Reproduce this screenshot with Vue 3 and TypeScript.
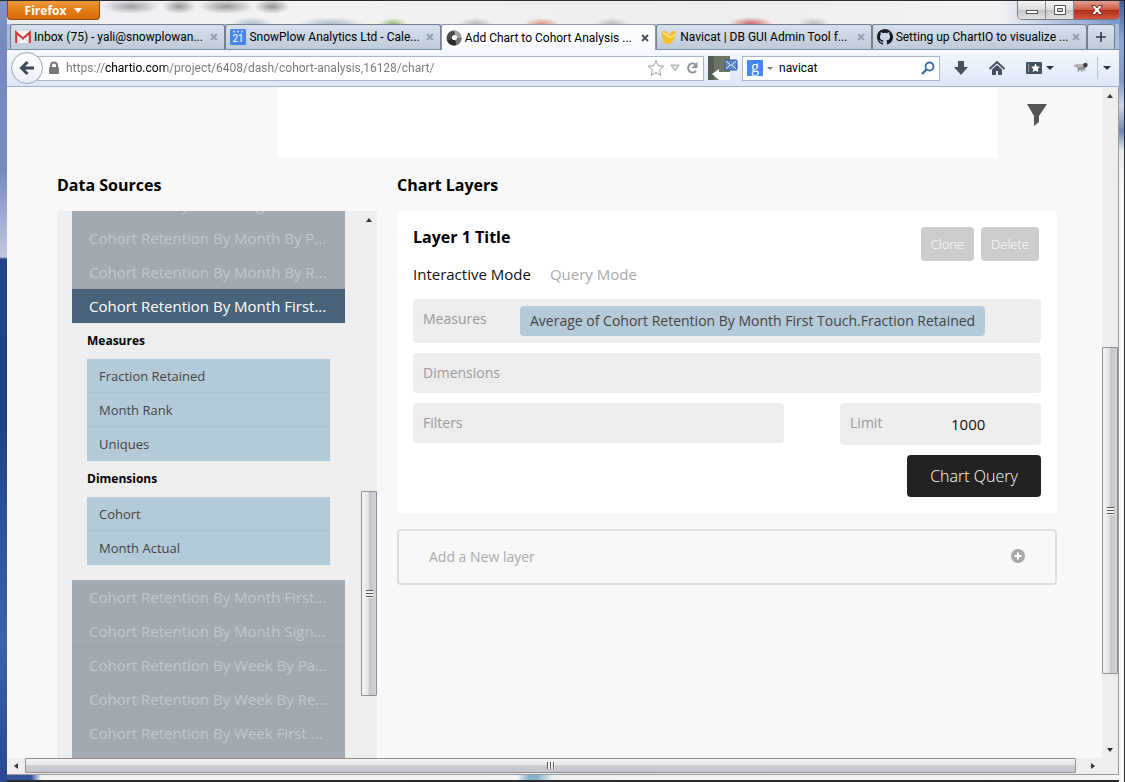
<script setup lang="ts">
import { ref } from 'vue'

interface Tab { id: string; title: string }

const tabs: Tab[] = [
  { id: 'gmail', title: 'Inbox (75) - yali@snowplowan...' },
  { id: 'calendar', title: 'SnowPlow Analytics Ltd - Cale...' },
  { id: 'chartio', title: 'Add Chart to Cohort Analysis ...' },
  { id: 'navicat', title: 'Navicat | DB GUI Admin Tool f...' },
  { id: 'github', title: 'Setting up ChartIO to visualize ...' },
]
const activeTab = ref('chartio')
const url = ref('https://chartio.com/project/6408/dash/cohort-analysis,16128/chart/')
const search = ref('navicat')
const limit = ref('1000')
const mode = ref('Interactive Mode')
const modes = ['Interactive Mode', 'Query Mode']

const tablesAbove = [
  'Cohort Size By Marketing, P...',
  'Cohort Retention By Month By P...',
  'Cohort Retention By Month By R...',
]
const selectedTable = 'Cohort Retention By Month First...'
const fieldGroups = [
  { name: 'Measures', fields: ['Fraction Retained', 'Month Rank', 'Uniques'] },
  { name: 'Dimensions', fields: ['Cohort', 'Month Actual'] },
]
const tablesBelow = [
  'Cohort Retention By Month First...',
  'Cohort Retention By Month Sign...',
  'Cohort Retention By Week By Pa...',
  'Cohort Retention By Week By Re...',
  'Cohort Retention By Week First ...',
]
</script>

<template>
  <div class="window">
    <header class="titlebar">
      <button class="firefox" type="button">Firefox <span class="caret light"></span></button>
      <div class="backdrop" aria-hidden="true"></div>
      <div class="controls">
        <button type="button" aria-label="Minimize">
          <svg width="14" height="12" viewBox="0 0 14 12"><rect x="1.5" y="6.5" width="11" height="3" fill="#fff" stroke="#555" /></svg>
        </button>
        <button type="button" aria-label="Maximize">
          <svg width="14" height="12" viewBox="0 0 14 12"><path d="M1.5 1.5h11v9h-11zM4.500 4.500h5v3h-5z" fill="#fff" fill-rule="evenodd" stroke="#555" /></svg>
        </button>
        <button type="button" class="close" aria-label="Close">
          <svg width="14" height="12" viewBox="0 0 14 12"><path d="M1.500 1.500h3.500l2 2.500 2-2.500h3.500L9 6l3.500 4.500H9L7 8l-2 2.500H1.500L5 6z" fill="#fff" stroke="#6b3a38" /></svg>
        </button>
      </div>
    </header>

    <nav class="tabs" aria-label="Browser tabs">
      <div v-for="tab in tabs" :key="tab.id" class="tab" :class="{ active: tab.id === activeTab }">
        <button class="tab-main" type="button" @click="activeTab = tab.id">
          <svg v-if="tab.id === 'gmail'" width="16" height="16" viewBox="0 0 16 16"><rect y="2" width="16" height="12" rx="1" fill="#f4f4f4" /><path d="M1.200 14V3.500L8 9.500l6.800-6V14" fill="none" stroke="#d5393b" stroke-width="2.200" /><path d="M3 13l4-4M13 13L9 9" stroke="#ccc" /></svg>
          <svg v-else-if="tab.id === 'calendar'" width="16" height="16" viewBox="0 0 16 16"><rect width="16" height="16" rx="1" fill="#4787ed" /><path d="M4 1.500v2M8 1.500v2M12 1.500v2" stroke="#cfe0ff" stroke-width="1.500" /><text x="8" y="13" text-anchor="middle" font-size="10" fill="#fff">21</text></svg>
          <svg v-else-if="tab.id === 'chartio'" width="16" height="16" viewBox="0 0 16 16"><circle cx="8" cy="8" r="7.500" fill="#4c4c4c" /><path d="M8 .5A7.500 7.500 0 0 1 15.500 8H10z" fill="#a4a4a4" /><path d="M15.500 8a7.500 7.500 0 0 1-5 7L9 9z" fill="#777" /><path d="M1 10a7.500 7.500 0 0 0 9.500 5L8 9z" fill="#292929" /><circle cx="8.500" cy="7.500" r="2.600" fill="#fff" /></svg>
          <svg v-else-if="tab.id === 'navicat'" width="16" height="16" viewBox="0 0 16 16"><path d="M1 3c2-2 5-1 6 2 2 1 3 0 3-2 3-2 5-1 5 2 0 2-1 3-2 5s-2 5-6 5c-3 0-6-2-5-6C1 8 0 5 1 3z" fill="#f5c02c" /><path d="M2 4c2 0 3 1 5 3s5 1 7-2" fill="none" stroke="#ffe58a" stroke-width="1.500" /></svg>
          <svg v-else width="16" height="16" viewBox="0 0 16 16"><path fill="#161b22" d="M8 0C3.580 0 0 3.580 0 8c0 3.540 2.290 6.530 5.470 7.590.4.070.55-.17.55-.38v-1.490c-2.230.49-2.700-.94-2.700-.94-.36-.93-.89-1.170-.89-1.170-.73-.5.050-.49.050-.49.800.060 1.230.83 1.230.83.710 1.220 1.870.87 2.330.66.070-.52.280-.87.500-1.070-1.780-.2-3.640-.89-3.640-3.950 0-.87.310-1.590.82-2.150-.08-.2-.36-1.020.08-2.120 0 0 .67-.21 2.200.82a7.600 7.600 0 0 1 4 0c1.530-1.040 2.200-.82 2.200-.82.440 1.100.160 1.920.080 2.120.510.560.820 1.270.820 2.150 0 3.070-1.870 3.750-3.650 3.950.290.250.540.730.540 1.480v2.190c0 .21.150.46.550.38A8 8 0 0 0 8 0z" /></svg>
          <span>{{ tab.title }}</span>
        </button>
        <button class="tab-close" type="button" :aria-label="'Close ' + tab.title">
          <svg width="8" height="8" viewBox="0 0 8 8"><path d="M1 1l6 6M7 1L1 7" stroke="currentColor" stroke-width="1.800" /></svg>
        </button>
      </div>
      <button class="new-tab" type="button" aria-label="New tab">
        <svg width="12" height="12" viewBox="0 0 12 12"><path d="M6 1v10M1 6h10" stroke="#333d48" stroke-width="1.600" /></svg>
      </button>
    </nav>

    <div class="toolbar">
      <button class="back" type="button" aria-label="Back">
        <svg width="18" height="18" viewBox="0 0 18 18"><path d="M16 9H4M9.500 3L3.500 9l6 6" fill="none" stroke="#3f4b59" stroke-width="3" /></svg>
      </button>
      <div class="address">
        <svg width="12" height="14" viewBox="0 0 12 14"><path d="M3 7V4.500a3 3 0 0 1 6 0V7" fill="none" stroke="#777" stroke-width="2" /><rect x="1" y="6" width="10" height="7" rx="1" fill="#777" /></svg>
        <input v-model="url" type="text" aria-label="Address" spellcheck="false" />
        <button type="button" aria-label="Bookmark">
          <svg width="18" height="18" viewBox="0 0 18 18"><path d="M9 1.500l2.200 5.200 5.600.5-4.200 3.700 1.200 5.500L9 13.500l-4.800 2.900 1.200-5.500L1.200 7.200l5.600-.5z" fill="#fff" stroke="#9a9fa6" /></svg>
        </button>
        <button type="button" aria-label="History">
          <svg width="10" height="8" viewBox="0 0 10 8"><path d="M.8 1h8.400L5 7z" fill="#dcdfe4" stroke="#a3a8b0" /></svg>
        </button>
        <button type="button" aria-label="Reload">
          <svg width="14" height="14" viewBox="0 0 14 14"><path d="M10.500 3.500A4.500 4.500 0 1 0 11 10" fill="none" stroke="#8c939d" stroke-width="2" /><path d="M12.500 1v6h-6z" fill="#8c939d" /></svg>
        </button>
      </div>
      <button class="mail" type="button" aria-label="Mail preview">
        <svg width="30" height="24" viewBox="0 0 30 24"><path d="M0 0h22v24H0z" fill="#6d7463" /><path d="M0 0h6v24H0z" fill="#535d55" /><path d="M11 13v3h11v8H11v0L4 18z" fill="#fff" /><rect x="17" y="4" width="12" height="10" rx="1" fill="#5c88c6" stroke="#345b96" /><path d="M18 5l5 4.500L28 5M18 13l4-4M28 13l-4-4" fill="none" stroke="#dce9fa" /></svg>
      </button>
      <div class="search">
        <svg width="16" height="16" viewBox="0 0 16 16"><rect width="16" height="16" rx="1" fill="#4486f4" /><text x="8" y="12" text-anchor="middle" font-size="16" fill="#fff">g</text></svg>
        <span class="caret small"></span>
        <input v-model="search" type="text" aria-label="Search" spellcheck="false" />
        <button type="button" aria-label="Go">
          <svg width="14" height="14" viewBox="0 0 14 14"><circle cx="8.500" cy="5.500" r="4" fill="none" stroke="#3c6ca3" stroke-width="1.800" /><path d="M5.500 8.500L1 13" stroke="#3c6ca3" stroke-width="2.400" /></svg>
        </button>
      </div>
      <div class="tools">
        <button type="button" aria-label="Downloads">
          <svg width="16" height="16" viewBox="0 0 16 16"><path d="M5 1h6v6h4l-7 8-7-8h4z" fill="#47525f" /></svg>
        </button>
        <button type="button" aria-label="Home">
          <svg width="18" height="16" viewBox="0 0 18 16"><path d="M1.500 9L9 2l7.500 7" fill="none" stroke="#47525f" stroke-width="2" /><path d="M4 9.500l5-4.500 5 4.500V15h-4v-4H8v4H4z" fill="#47525f" /></svg>
        </button>
        <button type="button" aria-label="Bookmarks">
          <svg width="18" height="16" viewBox="0 0 18 16"><rect x="1" y="2" width="16" height="12" rx="1" fill="#47525f" /><path d="M3.500 4v8" stroke="#8d96a1" /><path d="M10.500 3.500l1.400 2.900 3.100.4-2.300 2.200.6 3.100-2.800-1.500-2.800 1.500.6-3.100L6 6.800l3.100-.4z" fill="#fff" /></svg>
          <span class="caret"></span>
        </button>
        <div class="tail">
          <button type="button" aria-label="Firebug">
            <svg width="16" height="14" viewBox="0 0 16 14"><ellipse cx="9" cy="6" rx="5" ry="3" fill="#8f8f8c" transform="rotate(-20 9 6)" /><ellipse cx="6" cy="4.500" rx="4" ry="1.800" fill="#bbb" /><circle cx="12.500" cy="4" r="2.200" fill="#44413d" /><path d="M6 8l-1 3M9 9v2M11 8l1 2M1 5h4" stroke="#888" /></svg>
          </button>
          <button class="more" type="button" aria-label="More tools"><span class="caret"></span></button>
        </div>
      </div>
    </div>

    <div class="viewport">
      <main class="page">
        <section class="preview">
          <div class="chart-area"></div>
          <button type="button" aria-label="Filter">
            <svg width="20" height="23" viewBox="0 0 20 23"><path d="M0 0h20l-8 12v6l-5 4V12z" fill="#555" /></svg>
          </button>
        </section>

        <div class="columns">
          <section class="sources">
            <h2>Data Sources</h2>
            <div class="source-panel">
              <div class="source-list">
                <button v-for="t in tablesAbove" :key="t" class="source" type="button">{{ t }}</button>
                <button class="source selected" type="button">{{ selectedTable }}</button>
                <div class="fields">
                  <template v-for="group in fieldGroups" :key="group.name">
                    <h3>{{ group.name }}</h3>
                    <ul>
                      <li v-for="f in group.fields" :key="f">{{ f }}</li>
                    </ul>
                  </template>
                </div>
                <button v-for="t in tablesBelow" :key="t" class="source" type="button">{{ t }}</button>
                <div class="source"></div>
              </div>
              <div class="scroll vertical inner" aria-hidden="true">
                <span class="arrow"><i class="up"></i></span>
                <span class="before"></span>
                <span class="thumb"><i class="grip"></i></span>
                <span class="after"></span>
              </div>
            </div>
          </section>

          <section class="layers">
            <h2>Chart Layers</h2>
            <form class="card" @submit.prevent>
              <div class="card-head">
                <h3>Layer 1 Title</h3>
                <button type="button">Clone</button>
                <button type="button">Delete</button>
              </div>
              <div class="modes">
                <button v-for="m in modes" :key="m" type="button" :class="{ on: m === mode }" @click="mode = m">{{ m }}</button>
              </div>
              <div class="slot measures">
                <span class="slot-name">Measures</span>
                <span class="pill">Average of Cohort Retention By Month First Touch.Fraction Retained</span>
              </div>
              <div class="slot"><span class="slot-name">Dimensions</span></div>
              <div class="slot-row">
                <div class="slot filters"><span class="slot-name">Filters</span></div>
                <div class="slot limit">
                  <label class="slot-name" for="limit">Limit</label>
                  <input id="limit" v-model="limit" type="text" />
                </div>
              </div>
              <button class="submit" type="submit">Chart Query</button>
            </form>
            <button class="add" type="button">
              Add a New layer
              <svg width="14" height="14" viewBox="0 0 14 14"><circle cx="7" cy="7" r="7" fill="#aaa" /><path d="M7 3.500v7M3.500 7h7" stroke="#fff" stroke-width="2" /></svg>
            </button>
          </section>
        </div>
      </main>
      <div class="scroll vertical outer" aria-hidden="true">
        <span class="arrow"><i class="up"></i></span>
        <span class="before"></span>
        <span class="thumb"><i class="grip"></i></span>
        <span class="after"></span>
        <span class="arrow"><i class="down"></i></span>
      </div>
      <div class="scroll horizontal" aria-hidden="true">
        <span class="arrow"><i class="left"></i></span>
        <span class="thumb"><i class="grip"></i></span>
        <span class="arrow end"><i class="right"></i></span>
      </div>
      <div class="corner"></div>
    </div>
    <footer class="frame-bottom"></footer>
  </div>
</template>

<style>
body { overflow: hidden; }
</style>

<style scoped>
* { box-sizing: border-box; }
button { padding: 0; border: 0; background: none; font: inherit; color: inherit; }
input { min-width: 0; padding: 0; border: 0; outline: 0; background: none; font: inherit; }
h2, h3, ul { margin: 0; padding: 0; list-style: none; }
svg { display: block; flex: none; }

.window {
  display: flex;
  flex-direction: column;
  height: 100vh;
  padding: 0 5px 0 7px;
  border-top: 1px solid #2c2a2d;
  border-right: 1px solid #29292c;
  font-family: "Open Sans", "Noto Sans", sans-serif;
  font-size: 12px;
  color: #000;
  background:
    linear-gradient(#8193c6 0, #7588be 50px, #7889c0 170px, #c4c9e3 256px, #234587 258px, #1f4184 420px, #3d62ad 640px, #28478f 100%) left / 7px 100% no-repeat,
    linear-gradient(#3f5fa3 0, #8fa6d8 40px, #8398c7 80px, #cdd6e8 105px, #7186b4 130px, #e8ebf1 150px, #fafafa 190px, #fafafa 100%) right / 5px 100% no-repeat,
    #e9eaec;
}
.titlebar { display: flex; flex: none; height: 23px; align-items: flex-start; }
.firefox {
  display: flex;
  align-items: center;
  justify-content: center;
  gap: 8px;
  width: 93px;
  height: 19px;
  border: 1px solid #8b4a17;
  border-top: 0;
  border-radius: 0 0 4px 4px;
  background: linear-gradient(#ee9a3c, #e27912 60%, #d96c0c);
  color: #fff;
  font-weight: 700;
}
.backdrop {
  flex: 1;
  height: 23px;
  margin-right: -103px;
  background:
    radial-gradient(ellipse at center, #a0a0a3, transparent 70%) 2px -2px / 58px 15px no-repeat,
    radial-gradient(ellipse at center, #98989b, transparent 70%) 62px -2px / 34px 15px no-repeat,
    radial-gradient(ellipse at center, #98989b, transparent 70%) 98px -2px / 56px 15px no-repeat,
    radial-gradient(ellipse at center, #949498, transparent 70%) 154px -2px / 36px 15px no-repeat,
    radial-gradient(ellipse at center, #a5b5c2, transparent 70%) 130px 16px / 44px 16px no-repeat,
    radial-gradient(ellipse at center, #a3b3c1, transparent 70%) 196px 16px / 70px 16px no-repeat,
    radial-gradient(ellipse at center, #94b578, transparent 70%) 278px 17px / 30px 12px no-repeat,
    radial-gradient(ellipse at center, #b8b8b8, transparent 70%) 358px 17px / 36px 12px no-repeat,
    radial-gradient(ellipse at center, #df907c, transparent 70%) 424px 17px / 36px 12px no-repeat,
    radial-gradient(ellipse at center, #bcbcbc, transparent 70%) 494px 17px / 36px 12px no-repeat,
    radial-gradient(ellipse at center, #cf6262, transparent 70%) 628px 16px / 46px 14px no-repeat,
    radial-gradient(ellipse at center, #bdbdbd, transparent 70%) 698px 16px / 32px 14px no-repeat,
    linear-gradient(90deg, #eef0f3 0, #f2f2f2 20%, #ededee 60%, #f3f3f3 88%, #7796cf 100%);
}
.controls {
  display: flex;
  z-index: 1;
  width: 103px;
  height: 19px;
  margin-right: -1px;
  border: 1px solid #77797f;
  border-top: 0;
  border-radius: 0 0 5px 5px;
  overflow: hidden;
}
.controls button {
  display: grid;
  place-items: center;
  width: 28px;
  border-right: 1px solid #888;
  background: linear-gradient(#f4f4f4, #dcdcdc 50%, #c3c4c6 50%, #e2e2e2);
}
.controls .close { flex: 1; border: 0; background: linear-gradient(#e0a294, #cf5742 48%, #b02b19 50%, #cf553e); }

.caret { width: 0; height: 0; border: 4px solid transparent; border-top-color: #2c3440; border-bottom-width: 0; }
.caret.light { border-top-color: #fff; border-top-width: 5px; }
.caret.small { border-width: 3px 3px 0; border-top-color: #777; }

.tabs, .toolbar { font-family: Roboto, "Open Sans", sans-serif; }
.tabs { display: flex; flex: none; height: 26px; padding: 0 4px 0 3px; background: linear-gradient(90deg, #a9b9da, #c2cedd 60%, #a9b9da); border-bottom: 1px solid #7d8ea4; }
.tab {
  display: flex;
  flex: 1 1 0;
  min-width: 0;
  align-items: center;
  padding-right: 3px;
  border: 1px solid #75808e;
  border-bottom: 0;
  border-radius: 3px 3px 0 0;
  background: linear-gradient(#d6e0ec, #bfcbd9);
}
.tab.active { margin-bottom: -1px; border-color: #8c98a8; background: linear-gradient(#fff, #f7fafe); }
.tab-main { display: flex; flex: 1; min-width: 0; align-items: center; gap: 3px; padding-left: 4px; text-align: left; }
.tab-main span { white-space: nowrap; }
.tab-close { display: grid; place-items: center; width: 14px; height: 20px; color: #94a0ad; }
.active .tab-close { color: #434d58; }
.new-tab { display: grid; place-items: center; width: 28px; border: 1px solid #75808e; border-bottom: 0; border-radius: 3px 3px 0 0; background: linear-gradient(#d6e0ec, #bfcbd9); }

.toolbar {
  display: flex;
  flex: none;
  align-items: center;
  height: 37px;
  padding-left: 4px;
  background: linear-gradient(#f5f9fe, #dce7f5);
  border-bottom: 1px solid #9db3d3;
}
.back { display: grid; place-items: center; flex: none; z-index: 1; width: 32px; height: 32px; border: 1px solid #9aa8b8; border-radius: 50%; background: linear-gradient(#fff, #e9eff7); }
.address { display: flex; flex: 1; align-items: center; height: 25px; margin-left: -6px; padding: 0 4px 0 10px; border: 1px solid #a9b6c6; background: #fff; }
.address input {
  flex: 1;
  margin-left: 6px;
  color: transparent;
  background: linear-gradient(90deg, #777 38px, #000 38px 101px, #777 101px) text;
}
.address button { margin-left: 5px; }
.mail { width: 30px; height: 24px; margin: 0 4px; }
.search { display: flex; align-items: center; width: 198px; height: 25px; padding: 0 4px; border: 1px solid #a9b6c6; background: #fff; }
.search svg text { font-family: "Liberation Serif", serif; }
.search .caret { margin: 0 6px 0 4px; }
.search input { flex: 1; }
.tools { display: flex; align-items: center; gap: 19px; width: 179px; padding-left: 13px; }
.tools button { display: flex; align-items: center; gap: 3px; }
.tail { display: flex; align-items: center; gap: 8px; }
.tools .more { height: 22px; padding-left: 5px; border-left: 1px solid #b9c4d2; }

.viewport { display: grid; flex: 1; min-height: 0; grid-template: minmax(0, 1fr) 17px / minmax(0, 1fr) 16px; border-right: 1px solid #999; background: #f8f8f8; }
.page { display: flex; flex-direction: column; min-height: 0; padding: 0 45px 0 50px; overflow: hidden; background: #f8f8f8; }
.preview { display: grid; flex: none; grid-template-columns: 22% 72% 6%; height: 71px; }
.chart-area { grid-column: 2; background: #fff; }
.preview button { justify-self: center; align-self: start; margin-top: 17px; margin-left: 20px; }
.columns { display: grid; flex: 1; min-height: 0; grid-template: minmax(0, 1fr) / 32fr 66fr; column-gap: 20px; }
h2 { flex: none; height: 53px; font-size: 16px; line-height: 54px; }
.sources { display: flex; flex-direction: column; min-height: 0; }
.source-panel { display: flex; flex: 1; min-height: 0; padding-left: 15px; overflow: hidden; background: #eee; }
.source-list { flex: 1; min-width: 0; margin-top: -24px; margin-right: 16px; }
.source {
  display: block;
  width: 100%;
  height: 34px;
  padding: 0 17px;
  border-bottom: 1px solid #9da5ac;
  background: #a2a9b0;
  color: #c3c6c9;
  font-size: 15px;
  text-align: left;
  white-space: nowrap;
}
.source.selected { border: 0; background: #48637a; color: #fff; }
.fields { padding: 0 15px 15px; }
.fields h3 { height: 36px; font-size: 12px; line-height: 36px; }
.fields li { height: 34px; padding-left: 12px; border-bottom: 1px solid #abc2d1; background: #b5cad8; color: #444; font-size: 13px; line-height: 34px; }
.fields li:last-child { border: 0; }

.layers { min-width: 0; }
.card { display: flex; flex-direction: column; padding: 16px; border-radius: 3px; background: #fff; }
.card-head { display: flex; height: 34px; padding-right: 2px; gap: 7px; }
.card-head h3 { flex: 1; font-size: 16px; line-height: 20px; }
.card-head button { padding: 0 10px; border-radius: 4px; background: #ccc; color: #fff; font-size: 13px; font-weight: 300; }
.modes { display: flex; gap: 19px; height: 38px; color: #aaa; font-size: 15px; align-items: flex-start; line-height: 26px; }
.modes .on { color: #111; }
.slot { display: flex; height: 40px; margin-bottom: 10px; padding: 0 10px; border-radius: 4px; background: #ededed; }
.slot-name { width: 97px; color: #999; font-size: 14px; line-height: 40px; }
.measures { height: 44px; align-items: flex-start; }
.pill { margin-top: 7px; padding: 0 10px; border-radius: 4px; background: #b5cad8; color: #444; font-size: 14px; line-height: 30px; white-space: nowrap; }
.slot-row { display: flex; justify-content: space-between; align-items: flex-start; }
.filters { width: 59%; }
.limit { width: 32%; height: 42px; }
.limit input { flex: 1; padding-left: 4px; font-size: 15px; color: #111; }
.submit { align-self: flex-end; width: 134px; height: 42px; border-radius: 4px; background: #222; color: #fff; font-size: 16px; font-weight: 300; }
.add {
  display: flex;
  align-items: center;
  justify-content: space-between;
  width: 100%;
  height: 56px;
  margin-top: 16px;
  padding: 0 30px 2px;
  border: 2px solid #ddd;
  border-radius: 4px;
  color: #aaa;
  font-size: 14px;
}

.scroll { display: flex; background: #eee; }
.vertical { flex: none; flex-direction: column; width: 16px; }
.horizontal { height: 17px; padding-bottom: 1px; border-bottom: 1px solid #999; }
.scroll span { flex: none; }
.arrow { display: grid; place-items: center; width: 16px; height: 17px; }
.horizontal .arrow { width: 18px; height: 15px; }
.horizontal .end { margin-left: 8px; }
.arrow i { border: 3px solid transparent; }
.arrow .up { border-bottom: 4px solid #333; border-top: 0; }
.arrow .down { border-top: 4px solid #333; border-bottom: 0; }
.arrow .left { border-right: 4px solid #333; border-left: 0; }
.arrow .right { border-left: 4px solid #333; border-right: 0; }
.scroll .thumb { display: grid; place-items: center; border: 1px solid #8f9094; border-radius: 1px; background: linear-gradient(90deg, #f5f5f6, #e3e3e6 45%, #c4c4cb 55%, #d3d3d9); }
.horizontal .thumb { flex: 1; background: linear-gradient(#f5f5f6, #e3e3e6 45%, #c9c9cf 55%, #c6c6cc); }
.grip { width: 7px; height: 8px; background: repeating-linear-gradient(#555 0 1px, #f4f4f4 1px 3px); }
.horizontal .grip { width: 8px; height: 7px; background: repeating-linear-gradient(90deg, #555 0 1px, #f4f4f4 1px 3px); }
.scroll.inner .before { flex: 264 0 0; }
.scroll.inner .thumb { flex: 204 0 0; }
.scroll.inner .after { flex: 62 0 0; }
.scroll.outer .before { flex: 244 0 0; }
.scroll.outer .thumb { flex: 326 0 0; }
.scroll.outer .after { flex: 67 0 0; }
.corner { background: #eee; border-bottom: 1px solid #999; }
.frame-bottom {
  flex: none;
  height: 7px;
  border-bottom: 2px solid #29292c;
  background: linear-gradient(90deg, #34539a 0, #34539a 24px, #f2f2f2 34px, #f5f5f5 510px, #83b3cb 522px, #83b3cb 530px, #f1f1f1 546px, #f5f5f5);
}
</style>
